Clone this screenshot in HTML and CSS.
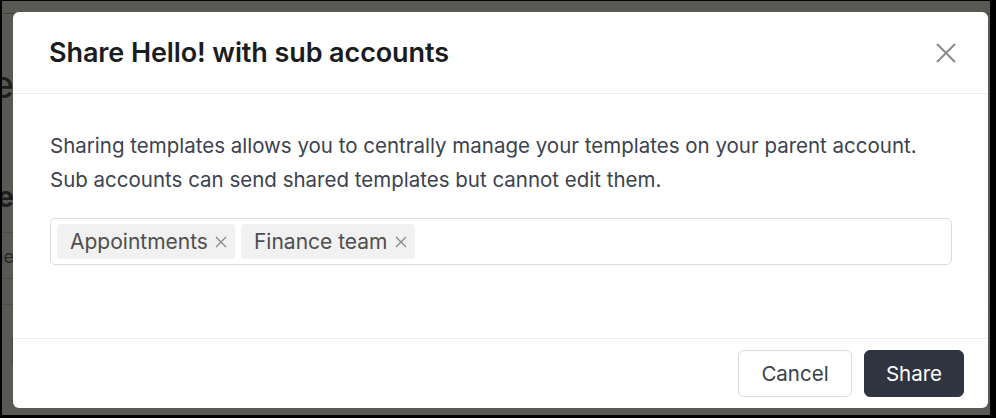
FILE: index.html
```html
<!doctype html>
<html lang="en">
<head>
<meta charset="UTF-8">
<meta name="viewport" content="width=device-width, initial-scale=1">
<title>Share template</title>
<link rel="stylesheet" href="styles.css">
</head>
<body>
<div class="screen">
    <!-- page behind the dialog, only its left edge shows -->
    <div class="bg-page">
        <div class="bg-topline"></div>
        <div class="bg-heading"><span>Message Template</span></div>
        <div class="bg-sub"><span>Use</span></div>
        <div class="bg-row"><span>Name</span></div>
        <div class="bg-row bg-row-short"></div>
        <div class="bg-row bg-row-short"></div>
        <div class="bg-box"></div>
    </div>

    <div class="overlay">
        <div class="modal">
            <div class="modal-header">
                <h2 class="modal-title">Share Hello! with sub accounts</h2>
                <button class="close-btn" aria-label="Close">
                    <svg width="22" height="22" viewBox="0 0 22 22">
                        <path d="M2 2 L20 20 M20 2 L2 20" stroke="#8a8a8a" stroke-width="2" fill="none"/>
                    </svg>
                </button>
            </div>

            <div class="modal-body">
                <p class="intro">Sharing templates allows you to centrally manage your templates on your parent account.<br>Sub accounts can send shared templates but cannot edit them.</p>
                <div class="tag-input">
                    <span class="tag">Appointments
                        <svg class="tag-x" width="12" height="12" viewBox="0 0 12 12"><path d="M1 1 L11 11 M11 1 L1 11" stroke="#8a8a8a" stroke-width="1.4" fill="none"/></svg>
                    </span>
                    <span class="tag">Finance team
                        <svg class="tag-x" width="12" height="12" viewBox="0 0 12 12"><path d="M1 1 L11 11 M11 1 L1 11" stroke="#8a8a8a" stroke-width="1.4" fill="none"/></svg>
                    </span>
                </div>
            </div>

            <div class="modal-footer">
                <button class="btn btn-light">Cancel</button>
                <button class="btn btn-dark">Share</button>
            </div>
        </div>
    </div>
</div>
</body>
</html>
```

FILE: styles.css
```css
body {
    margin: 0;
    padding: 0;
    font-family: Inter, "Noto Sans", sans-serif;
    overflow: hidden;
}

.screen {
    position: relative;
    width: 996px;
    height: 418px;
    box-sizing: border-box;
    border-style: solid;
    border-color: #000;
    border-width: 1px 6px 3px 2px;
    background: #fff;
    overflow: hidden;
}

/* Page under the overlay */
.bg-page {
    padding-top: 12px;
}

.bg-topline {
    height: 1px;
    background: #c9a35a;
}

.bg-heading,
.bg-sub,
.bg-row span {
    width: 12px;
    display: flex;
    justify-content: flex-end;
    white-space: nowrap;
}

.bg-heading {
    margin-top: 48px;
    font-size: 38px;
    line-height: 44px;
    color: #000;
}

.bg-sub {
    margin-top: 74px;
    font-size: 28px;
    font-weight: 700;
    line-height: 34px;
    color: #000;
}

.bg-row {
    height: 45px;
    border-top: 1px solid #c8c8c8;
    margin-top: 18px;
}

.bg-row-short {
    height: 25px;
    margin-top: 0;
}

.bg-row span {
    margin-top: 13px;
    font-size: 18px;
    line-height: 22px;
    color: #333;
}

.bg-box {
    margin: 4px 0 0 10px;
    width: 60px;
    height: 32px;
    border: 1px solid #bbb;
    border-radius: 6px;
}

.overlay {
    position: absolute;
    inset: 0;
    background: rgba(38, 38, 32, 0.77);
    padding: 11px 0 0 11px;
}

.modal {
    width: 975px;
    height: 396px;
    background: #fff;
    border-radius: 6px;
    display: flex;
    flex-direction: column;
    overflow: hidden;
}

.modal-header {
    height: 81px;
    flex-shrink: 0;
    display: flex;
    align-items: center;
    justify-content: space-between;
    padding: 0 31px 0 36px;
    border-bottom: 1px solid #ececec;
}

.modal-title {
    margin: 0;
    font-size: 27px;
    font-weight: 600;
    color: #1b1c20;
    letter-spacing: -0.1px;
}

.close-btn {
    border: 0;
    background: none;
    padding: 0;
    width: 22px;
    height: 22px;
    cursor: pointer;
}

.close-btn svg {
    display: block;
}

.modal-body {
    flex: 1;
    padding: 35px 36px 0 37px;
}

.intro {
    margin: 0;
    font-size: 20.5px;
    line-height: 34px;
    color: #3c424e;
}

.tag-input {
    margin-top: 21px;
    height: 47px;
    box-sizing: border-box;
    border: 1px solid #dcdcdc;
    border-radius: 5px;
    padding: 0 6px;
    display: flex;
    align-items: center;
    gap: 6px;
}

.tag {
    height: 35px;
    display: inline-flex;
    align-items: center;
    gap: 7px;
    padding: 0 8px 0 13px;
    background: #f1f1f1;
    border-radius: 4px;
    font-size: 21px;
    color: #4f4f4f;
}

.tag-x {
    display: block;
}

.modal-footer {
    height: 70px;
    flex-shrink: 0;
    box-sizing: border-box;
    border-top: 1px solid #ececec;
    display: flex;
    align-items: center;
    justify-content: flex-end;
    gap: 12px;
    padding: 0 24px 1px 0;
}

.btn {
    height: 47px;
    border-radius: 6px;
    font-family: Inter, "Noto Sans", sans-serif;
    font-size: 20.5px;
    cursor: pointer;
}

.btn-light {
    width: 114px;
    background: #fff;
    border: 1px solid #dadada;
    color: #3a3f4a;
}

.btn-dark {
    width: 100px;
    background: #2e3540;
    border: 1px solid #2e3540;
    color: #fff;
}
```
